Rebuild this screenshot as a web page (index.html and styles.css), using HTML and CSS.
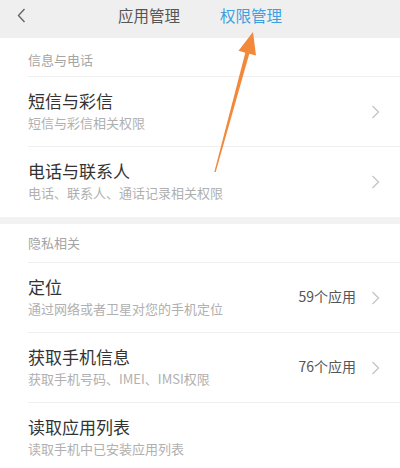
FILE: index.html
```html
<!DOCTYPE html>
<html lang="zh">
<head>
<meta charset="utf-8">
<link rel="stylesheet" href="styles.css">
</head>
<body>
<div class="screen">
  <header class="topbar">
    <div class="back">
      <svg width="9" height="15" viewBox="0 0 9 15"><polyline points="7.5,1 1.5,7.5 7.5,14" fill="none" stroke="#666" stroke-width="1.4"/></svg>
    </div>
    <nav class="tabs">
      <span class="tab">应用管理</span>
      <span class="tab active">权限管理</span>
    </nav>
    <div></div>
  </header>

  <section class="group">
    <div class="group-label">信息与电话</div>
    <div class="row">
      <div class="text"><div class="title">短信与彩信</div><div class="sub">短信与彩信相关权限</div></div>
      <svg class="chev" width="9" height="14" viewBox="0 0 9 14"><polyline points="1.5,1 7.5,7 1.5,13" fill="none" stroke="#c4c4c4" stroke-width="1.3"/></svg>
    </div>
    <div class="row last">
      <div class="text"><div class="title">电话与联系人</div><div class="sub">电话、联系人、通话记录相关权限</div></div>
      <svg class="chev" width="9" height="14" viewBox="0 0 9 14"><polyline points="1.5,1 7.5,7 1.5,13" fill="none" stroke="#c4c4c4" stroke-width="1.3"/></svg>
    </div>
  </section>

  <div class="band"></div>

  <section class="group">
    <div class="group-label second">隐私相关</div>
    <div class="row">
      <div class="text"><div class="title">定位</div><div class="sub">通过网络或者卫星对您的手机定位</div></div>
      <span class="count">59个应用</span>
      <svg class="chev" width="9" height="14" viewBox="0 0 9 14"><polyline points="1.5,1 7.5,7 1.5,13" fill="none" stroke="#c4c4c4" stroke-width="1.3"/></svg>
    </div>
    <div class="row">
      <div class="text"><div class="title">获取手机信息</div><div class="sub">获取手机号码、IMEI、IMSI权限</div></div>
      <span class="count">76个应用</span>
      <svg class="chev" width="9" height="14" viewBox="0 0 9 14"><polyline points="1.5,1 7.5,7 1.5,13" fill="none" stroke="#c4c4c4" stroke-width="1.3"/></svg>
    </div>
    <div class="row last">
      <div class="text"><div class="title">读取应用列表</div><div class="sub">读取手机中已安装应用列表</div></div>
    </div>
  </section>

  <svg class="arrow" width="400" height="468" viewBox="0 0 400 468">
    <polygon points="253,32 238.5,50.8 245.3,52.7 214.3,172 215.7,172 249.3,53.7 256,55.6" fill="#f2893a"/>
  </svg>
</div>
</body>
</html>
```

FILE: styles.css
```css
html, body {
  margin: 0;
  padding: 0;
  background: #fff;
}
body {
  font-family: "Noto Sans CJK SC", "Noto Sans", sans-serif;
  width: 400px;
  height: 468px;
  overflow: hidden;
}
.screen {
  position: relative;
  width: 400px;
  height: 468px;
  overflow: hidden;
}
.topbar {
  display: grid;
  grid-template-columns: 1fr auto 1fr;
  align-items: start;
  height: 38px;
  background: #efefef;
  box-sizing: border-box;
  padding-top: 4px;
}
.back {
  padding-left: 17px;
  padding-top: 4px;
  height: 15px;
}
.back svg { display: block; }
.tabs {
  display: flex;
  gap: 40px;
}
.tab {
  font-size: 15.5px;
  line-height: 22px;
  color: #555;
}
.tab.active { color: #3d9fe0; }

.group {
  padding-left: 28px;
}
.group-label {
  font-size: 13px;
  line-height: 20px;
  color: #a5a5a5;
  padding-top: 12px;
  height: 26px;
  border-bottom: 1px solid #efefef;
}
.group-label.second {
  padding-top: 9px;
  height: 29px;
}
.row {
  display: flex;
  align-items: center;
  height: 70px;
  box-sizing: border-box;
  border-bottom: 1px solid #efefef;
  padding-right: 20px;
}
.row.last { border-bottom: none; }
.text {
  flex: 1;
  padding-bottom: 2px;
}
.title {
  font-size: 17px;
  line-height: 24px;
  color: #333;
}
.sub {
  font-size: 13px;
  line-height: 20px;
  color: #b0b0b0;
}
.count {
  font-size: 14px;
  color: #555;
  margin-right: 15px;
  margin-top: -4px;
}
.chev { display: block; }
.band {
  height: 7px;
  background: #f2f2f2;
  margin-top: 0;
}
.arrow {
  position: absolute;
  left: 0;
  top: 0;
  pointer-events: none;
}
```
